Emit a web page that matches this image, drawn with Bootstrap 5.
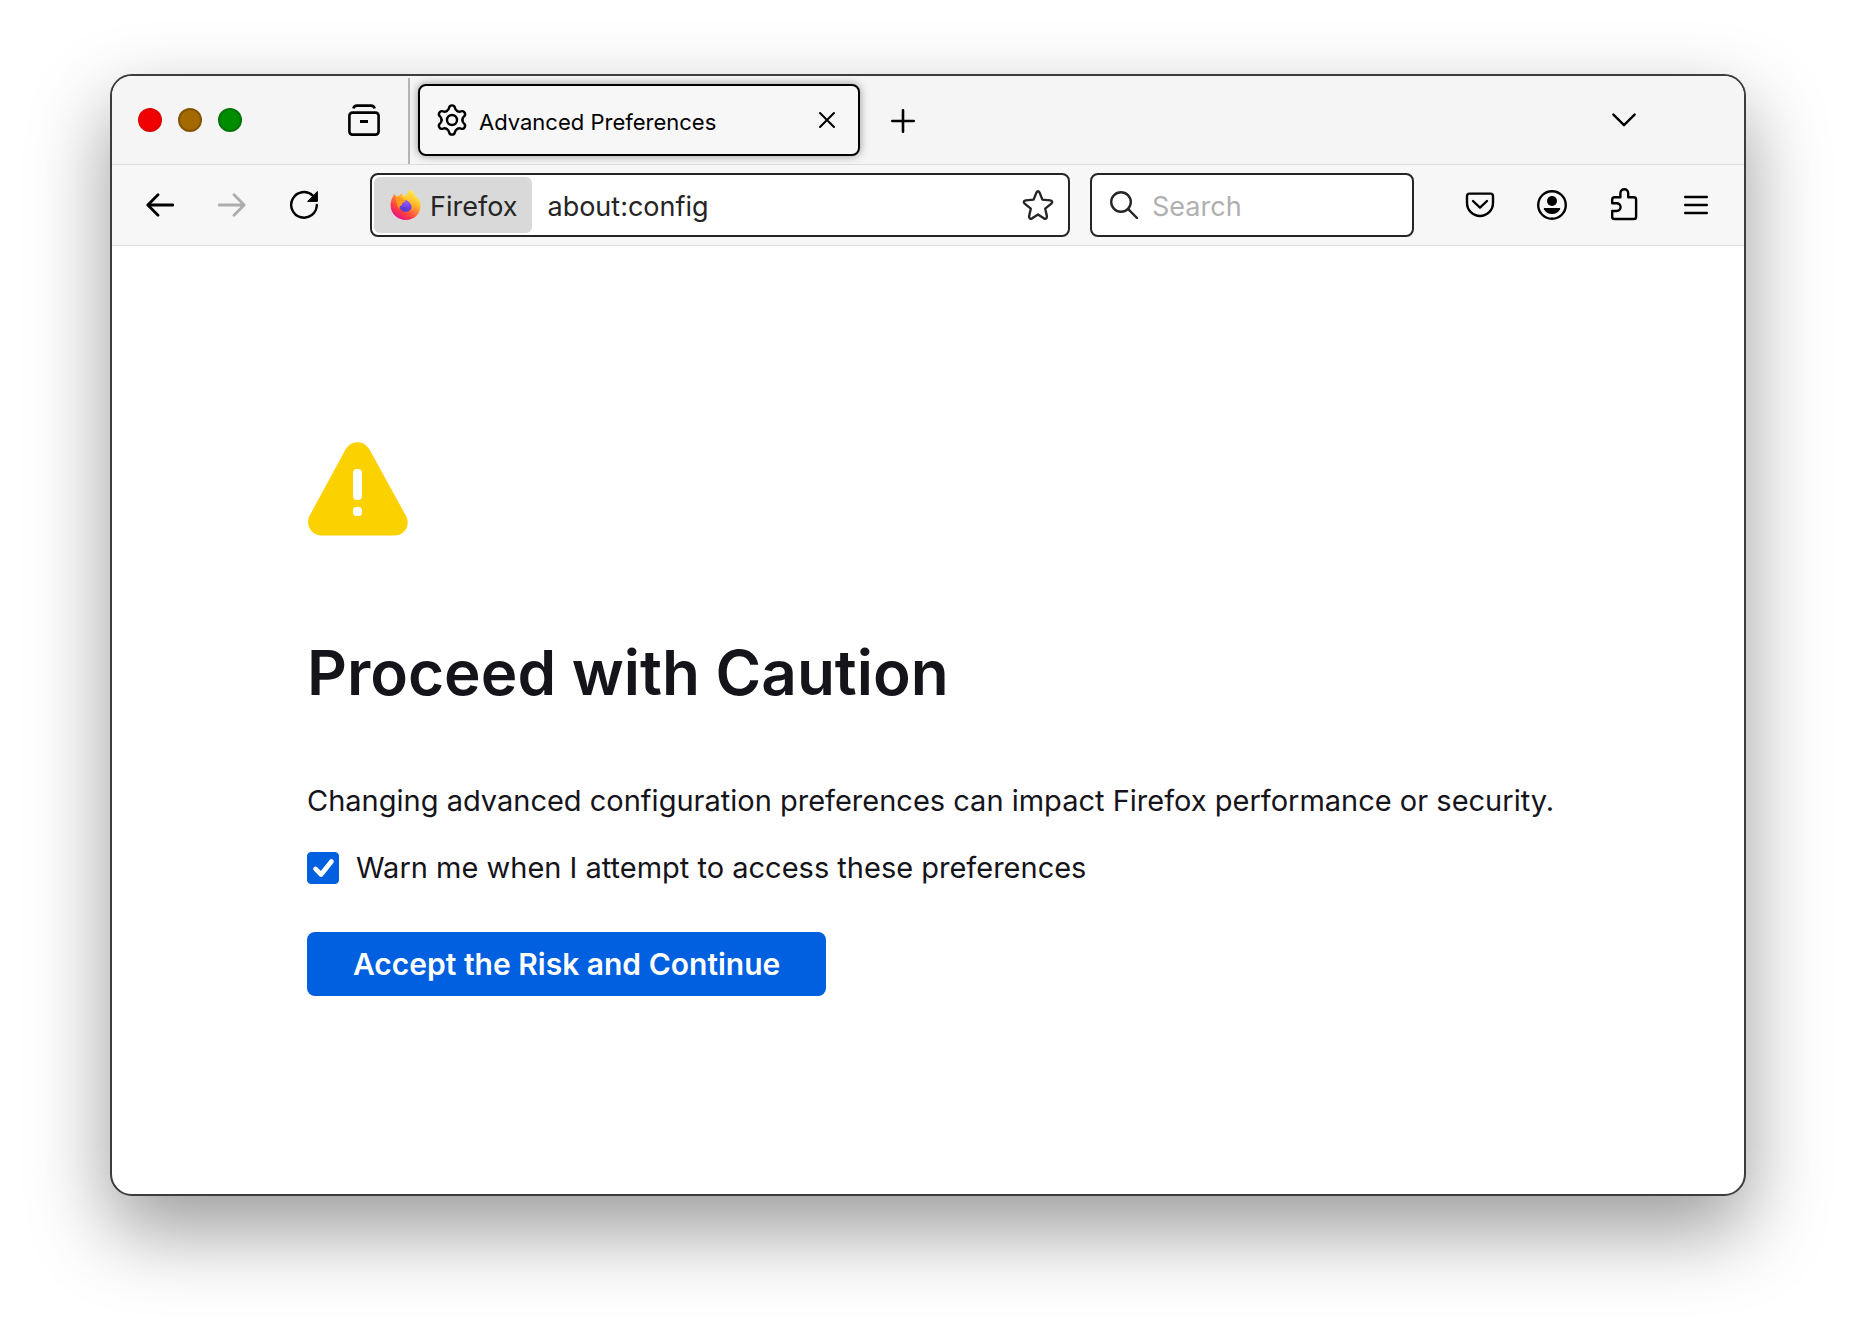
<!DOCTYPE html>
<html lang="en">
<head>
<meta charset="utf-8">
<meta name="viewport" content="width=device-width, initial-scale=1">
<title>Advanced Preferences</title>
<link href="https://cdn.jsdelivr.net/npm/bootstrap@5.3.0/dist/css/bootstrap.min.css" rel="stylesheet">
<style>
  body { font-family: Inter, "Liberation Sans", sans-serif; color: #15141a; background: #fff; padding: 74px 110px 146px; }
  svg { display: block; flex: none; }
  .app-window { border: 2px solid #3c3b3d; border-radius: 22px; background: #fff; box-shadow: 0 34px 80px rgba(0,0,0,.4); overflow: hidden; }
  .tab-strip { height: 89px; background: #f5f5f5; border-bottom: 1px solid #dcdcdc; color: #000; }
  .strip-start { width: 298px; border-right: 2px solid #b4b4b4; padding: 0 24px 2px 26px; margin-top: 2px; gap: 16px; }
  .light { width: 24px; height: 24px; border-radius: 50%; border: 2px solid; padding: 0; }
  .light-close { background: #f00000; border-color: #e00000; }
  .light-min { background: #a36a00; border-color: #865200; }
  .light-max { background: #008c00; border-color: #007400; }
  .icon-btn { border: 0; background: none; padding: 0; width: 40px; height: 40px; color: #000; display: flex; align-items: center; justify-content: center; flex: none; }
  .icon-btn:disabled { color: #adadad; }
  .browser-tab { width: 442px; height: 72px; margin: 8px 23px 0 8px; border: 2px solid #000; border-radius: 8px; background: #f7f7f7; box-shadow: 0 0 8px rgba(0,0,0,.4); padding: 0 11px 0 16px; gap: 11px; font-size: 22px; }
  .all-tabs { margin-right: 100px; }
  .tool-strip { height: 81px; background: #f7f7f7; border-bottom: 1px solid #dcdcdc; padding: 0 28px; }
  .nav-set { gap: 32px; }
  .field-set { flex: 1 1 0; min-width: 0; margin: 0 46px; gap: 20px; }
  .field { height: 64px; border: 2px solid #252525; border-radius: 8px; background: #fff; color: #252525; font-size: 27px; min-width: 0; }
  .field input { border: 0; outline: 0; background: none; color: inherit; min-width: 0; padding: 0; }
  .field input::placeholder { color: #b0b0b0; opacity: 1; }
  .chrome-text, .field input { padding-top: 4px; }
  .field .icon-btn { color: #252525; }
  .url-field { flex: 1 1 0; padding: 0 10px 0 2px; gap: 15px; }
  .search-field { flex: 0 1 324px; padding: 0 16px 0 18px; gap: 14px; }
  .identity { height: 56px; background: #d9d9d9; color: #252525; border: 0; border-radius: 6px; padding: 0 15px 0 16px; gap: 9px; }
  .page-main { padding: 196px 180px 100px 195px; font-size: 29px; line-height: 40px; }
  .page-title { font-size: 62px; line-height: 80px; font-weight: 600; margin: 97px 0 68px; }
  .warn-row { gap: 17px; margin: 27px 0 44px; }
  .warn-check.form-check-input { width: 32px; height: 32px; margin: 0; border-radius: 4px; flex: none; }
  .warn-check.form-check-input:checked { background-color: #0060df; border-color: #0060df; background-image: url("data:image/svg+xml,%3csvg xmlns='http://www.w3.org/2000/svg' viewBox='0 0 32 32'%3e%3cpath fill='none' stroke='%23fff' stroke-width='5' stroke-linecap='round' stroke-linejoin='round' d='M8 17l6 6L25 9'/%3e%3c/svg%3e"); }
  .accept-btn.btn { height: 64px; padding: 0 46px; border-radius: 8px; background: #0060df; color: #fff; font-size: 30px; line-height: 40px; font-weight: 600; border: 0; }
</style>
</head>
<body class="d-flex flex-column min-vh-100">
<div class="app-window d-flex flex-column flex-grow-1">

  <header>
    <div class="tab-strip d-flex align-items-stretch">
      <div class="strip-start d-flex align-items-center">
        <button class="light light-close" aria-label="Close window"></button>
        <button class="light light-min" aria-label="Minimize window"></button>
        <button class="light light-max" aria-label="Zoom window"></button>
        <button class="icon-btn ms-auto" aria-label="View recent browsing">
          <svg width="32" height="32" viewBox="0 0 32 32" fill="none" stroke="currentColor" stroke-width="2.6"><rect x="1.4" y="8.6" width="29.2" height="22" rx="3"/><path d="M5.4 4.400C5.800 2.400 7 1.600 9 1.600h14c2 0 3.200.8 3.600 2.800"/><path d="M12 17.400h8" stroke-width="3"/></svg>
        </button>
      </div>
      <div class="browser-tab d-flex align-items-center">
        <svg width="32" height="32" viewBox="0 0 32 32" fill="none" stroke="currentColor" stroke-width="2.400" stroke-linecap="round">
          <defs><path id="tooth" d="M10.800 7C12.600 6 12.800 5.400 13 4C13.300 2 14.300 1.400 16 1.400S18.700 2 19 4C19.200 5.400 19.400 6 21.200 7"/></defs>
          <use href="#tooth"/><use href="#tooth" transform="rotate(60 16 16)"/><use href="#tooth" transform="rotate(120 16 16)"/><use href="#tooth" transform="rotate(180 16 16)"/><use href="#tooth" transform="rotate(240 16 16)"/><use href="#tooth" transform="rotate(300 16 16)"/>
          <circle cx="16" cy="16" r="5"/>
        </svg>
        <span class="chrome-text flex-grow-1 text-truncate">Advanced Preferences</span>
        <button class="icon-btn" aria-label="Close tab">
          <svg width="18" height="18" viewBox="0 0 18 18" fill="none" stroke="currentColor" stroke-width="2" stroke-linecap="round"><path d="M2 2l14 14M16 2L2 16"/></svg>
        </button>
      </div>
      <button class="icon-btn align-self-center" aria-label="Open a new tab">
        <svg width="24" height="26" viewBox="0 0 24 26" fill="none" stroke="currentColor" stroke-width="2.600" stroke-linecap="round"><path d="M12 3.300v21.400M1.300 14h21.400"/></svg>
      </button>
      <button class="icon-btn all-tabs ms-auto align-self-center" aria-label="List all tabs">
        <svg width="24" height="14" viewBox="0 0 24 14" fill="none" stroke="currentColor" stroke-width="2.400" stroke-linecap="round" stroke-linejoin="round"><path d="M1.400 1.600L12 12.200 22.600 1.600"/></svg>
      </button>
    </div>

    <nav class="tool-strip d-flex align-items-center" aria-label="Navigation">
      <div class="nav-set d-flex">
        <button class="icon-btn" aria-label="Back">
          <svg width="28" height="24" viewBox="0 0 28 24" fill="none" stroke="currentColor" stroke-width="2.800" stroke-linecap="round" stroke-linejoin="round"><path d="M27 12H1.800M12 1.800L1.800 12 12 22.200"/></svg>
        </button>
        <button class="icon-btn" aria-label="Forward" disabled>
          <svg width="28" height="24" viewBox="0 0 28 24" fill="none" stroke="currentColor" stroke-width="2.800" stroke-linecap="round" stroke-linejoin="round"><path d="M1 12h25.200M16 1.800L26.200 12 16 22.200"/></svg>
        </button>
        <button class="icon-btn" aria-label="Reload">
          <svg width="30" height="30" viewBox="0 0 30 30" fill="none" stroke="currentColor" stroke-width="2.400" stroke-linecap="round"><path d="M27.800 15A12.800 12.800 0 1 1 23.600 5.400"/><path d="M28.400 1.800v9.600h-9.400z" fill="currentColor" stroke-width="1" stroke-linejoin="round"/></svg>
        </button>
      </div>

      <div class="field-set d-flex">
        <div class="field url-field d-flex align-items-center">
          <button class="identity d-flex align-items-center">
            <svg width="31" height="32" viewBox="0 0 31 32">
              <defs>
                <linearGradient id="flame" x1=".85" y1=".1" x2=".25" y2=".95"><stop offset="0" stop-color="#fff44f"/><stop offset=".3" stop-color="#ffbd2e"/><stop offset=".55" stop-color="#ff7139"/><stop offset=".78" stop-color="#ff3647"/><stop offset="1" stop-color="#e31587"/></linearGradient>
                <linearGradient id="swirl" x1=".9" y1="0" x2=".5" y2="1"><stop offset="0" stop-color="#ffe847"/><stop offset=".6" stop-color="#ffa81e"/><stop offset="1" stop-color="#ff6a35"/></linearGradient>
                <radialGradient id="globe" cx=".6" cy=".25" r=".8"><stop offset="0" stop-color="#9059ff"/><stop offset=".5" stop-color="#7542e5"/><stop offset="1" stop-color="#4a3bc9"/></radialGradient>
              </defs>
              <path fill="url(#flame)" d="M20 .6c2.500 1.300 4.500 3.900 5.200 6.400 2.600 1.400 4.600 4.600 5.300 7.500 1.300 8.500-4.800 16.500-14.500 16.500C7.200 31 .8 24.500.6 16.800.5 12.600 1.700 9.200 3.400 7c.1-.9.500-1.700 1-2.300.3 1 .7 1.700 1.300 2.300l3.600-.3c1-1.300 2.200-2 3.700-2.400-.7 1.100-1 2-.8 3l3.400.6C16.600 5.500 18.300 3 20 .6z"/>
              <circle cx="15.600" cy="16.400" r="6.400" fill="url(#globe)"/>
              <path fill="url(#swirl)" d="M18.400 5.500c.2 3 2.600 4.300 4.300 6.500 2.600 3.600 1.600 8.700-1.700 11.300 1-2.300 1.200-4.700.3-6.700-.9-2.200-2.100-4.200-4.300-5.200-1.300-.4-3.400.4-4.400.7L8.400 11 5.700 7l6.500.3c2.200-.9 4.300-1.400 6.200-1.800z"/>
              <path fill="#ff9a1f" d="M5.500 8.500c2-1 4.600-1 6.700.2.500 1.500 1.500 2.400 3.800 2.800-.6 1.800-2.800 2-3.600 2.700-.5.600 0 1.700-.8 2.200-1.700.2-2.300 1.300-2.300 3-1.100-.8-1.900-2-1.900-3.400-.6-2.400-1.700-4.800-1.900-7.500z"/>
              <path fill="#5a36cf" d="M12.500 17.500c1.300 1.500 4.300 1.700 5.500-.3-.4 3.400-3.600 4.300-6.200 3z" opacity=".7"/>
            </svg>
            <span class="chrome-text">Firefox</span>
          </button>
          <input class="flex-grow-1" type="text" value="about:config" aria-label="Address">
          <button class="icon-btn" aria-label="Bookmark this page">
            <svg width="32" height="32" viewBox="0 0 32 32" fill="none" stroke="currentColor" stroke-width="2.400" stroke-linejoin="round"><path d="M14.400 3.600Q16 .9 17.600 3.600L20.400 10.600L28.200 11.400Q31.600 12.200 29.300 14.600L23.200 19.600L24.900 27.200Q25 30.800 21.800 29.300L16 25.400L10.200 29.300Q7 30.800 7.100 27.200L8.800 19.600L2.700 14.600Q.4 12.200 3.800 11.400L11.600 10.600z"/></svg>
          </button>
        </div>
        <div class="field search-field d-flex align-items-center">
          <svg width="28" height="28" viewBox="0 0 28 28" fill="none" stroke="currentColor" stroke-width="2.400" stroke-linecap="round"><circle cx="11" cy="11" r="9.800"/><path d="M18.200 18.200L27 27"/></svg>
          <input class="flex-grow-1" type="text" placeholder="Search" aria-label="Search">
        </div>
      </div>

      <div class="nav-set d-flex">
        <button class="icon-btn" aria-label="Save to Pocket">
          <svg width="32" height="32" viewBox="0 0 32 32" fill="none" stroke="currentColor" stroke-width="2.400" stroke-linecap="round" stroke-linejoin="round"><path d="M5.600 4.600h20.800Q29 4.600 29 7.200V14A13 13 0 0 1 3 14V7.200Q3 4.600 5.600 4.600z"/><path d="M9 12l7 6.600L23 12"/></svg>
        </button>
        <button class="icon-btn" aria-label="Account">
          <svg width="32" height="32" viewBox="0 0 32 32" fill="currentColor"><circle cx="16" cy="16" r="13.800" fill="none" stroke="currentColor" stroke-width="2.400"/><circle cx="16" cy="12" r="5"/><path d="M8.700 19h14.600q1.200 0 .8 1.200C22.700 23.400 19.500 25 16 25s-6.700-1.600-8.100-4.800Q7.500 19 8.700 19z"/></svg>
        </button>
        <button class="icon-btn" aria-label="Extensions">
          <svg width="32" height="34" viewBox="0 0 32 34" fill="none" stroke="currentColor" stroke-width="2.400" stroke-linejoin="round"><path d="M4.200 15.200V11.600Q4.200 9.300 6.500 9.300H12.400V5.200a3.900 3.900 0 0 1 7.800 0V9.300H25.800Q28.100 9.300 28.100 11.600V28.700Q28.100 31 25.800 31H6.500Q4.200 31 4.200 28.700V23H8.700a3.900 3.900 0 0 0 0-7.800z"/></svg>
        </button>
        <button class="icon-btn" aria-label="Application menu">
          <svg width="24" height="20" viewBox="0 0 24 20" fill="none" stroke="currentColor" stroke-width="2.400" stroke-linecap="round"><path d="M1.200 2h21.600M1.200 10h21.600M1.200 18h21.600"/></svg>
        </button>
      </div>
    </nav>
  </header>

  <main class="page-main">
    <svg width="102" height="94" viewBox="0 0 102 94" role="img" aria-label="Warning"><path fill="#fbd200" d="M38.500 7.500C44-2.300 57-2.300 62.500 7.500l36.300 66C104 82.500 98 93.500 87.500 93.500h-73C4 93.500-2 82.500 2.700 73.500z"/><rect x="46" y="27" width="9" height="31" rx="4" fill="#fff"/><rect x="46" y="65" width="9" height="9" rx="3.500" fill="#fff"/></svg>
    <h1 class="page-title">Proceed with Caution</h1>
    <p class="mb-0">Changing advanced configuration preferences can impact Firefox performance or security.</p>
    <div class="warn-row d-flex align-items-center">
      <input class="form-check-input warn-check" type="checkbox" id="warn" checked>
      <label for="warn">Warn me when I attempt to access these preferences</label>
    </div>
    <button class="btn btn-primary accept-btn">Accept the Risk and Continue</button>
  </main>
</div>
<script src="https://cdn.jsdelivr.net/npm/bootstrap@5.3.0/dist/js/bootstrap.bundle.min.js"></script>
</body>
</html>
